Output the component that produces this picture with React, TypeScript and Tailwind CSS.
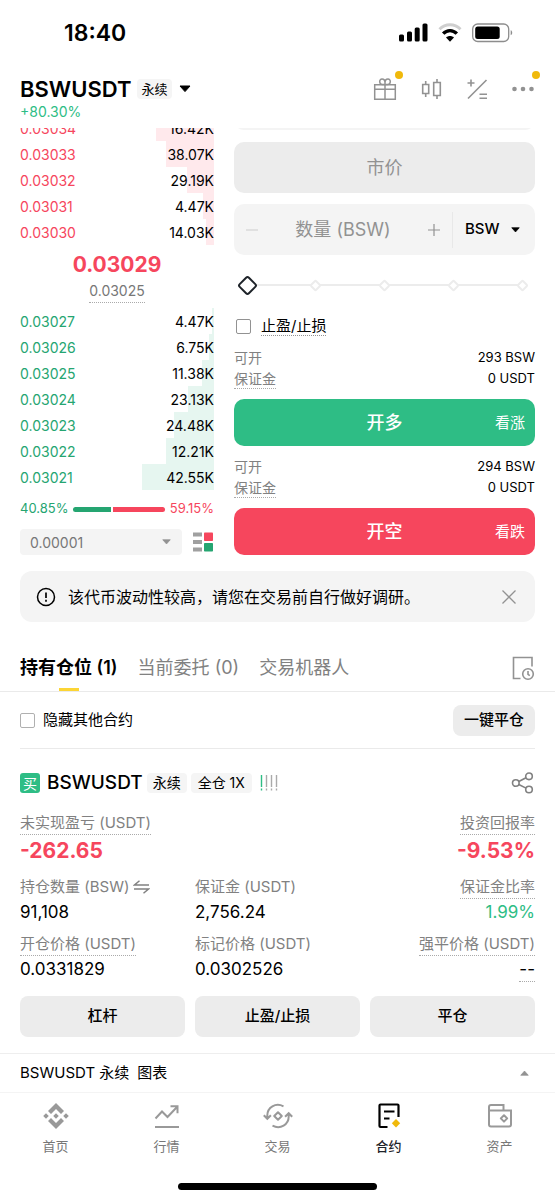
import { useState } from "react";
import type { ReactNode } from "react";
import clsx from "clsx";

type Order = {
  price: string;
  amount: string;
  depth: number; // percent of the book's width
};

const asks: Order[] = [
  { price: "0.03034", amount: "16.42K", depth: 30 },
  { price: "0.03033", amount: "38.07K", depth: 25 },
  { price: "0.03032", amount: "29.19K", depth: 14 },
  { price: "0.03031", amount: "4.47K", depth: 5.5 },
  { price: "0.03030", amount: "14.03K", depth: 4 },
];

const bids: Order[] = [
  { price: "0.03027", amount: "4.47K", depth: 1 },
  { price: "0.03026", amount: "6.75K", depth: 2.5 },
  { price: "0.03025", amount: "11.38K", depth: 6 },
  { price: "0.03024", amount: "23.13K", depth: 13.5 },
  { price: "0.03023", amount: "24.48K", depth: 20.5 },
  { price: "0.03022", amount: "12.21K", depth: 24.5 },
  { price: "0.03021", amount: "42.55K", depth: 37 },
];

const tabs = ["持有仓位 (1)", "当前委托 (0)", "交易机器人"];

function Triangle({ className, up }: { className?: string; up?: boolean }) {
  return (
    <svg viewBox="0 0 12 8" className={className} fill="currentColor" stroke="currentColor" strokeLinejoin="round">
      <path d={up ? "M1 7h10L6 1.4z" : "M1 1h10L6 6.6z"} />
    </svg>
  );
}

function StatusBar() {
  return (
    <div className="flex h-[66px] items-center justify-between pr-[42px] pl-16">
      <span className="text-[23px] leading-7 font-semibold">18:40</span>
      <div className="flex items-center gap-[10px]">
        <svg viewBox="0 0 29 20" className="h-5 w-[29px]">
          <rect x="0" y="11.5" width="5" height="7" rx="1.5" />
          <rect x="8" y="8.5" width="5" height="10" rx="1.5" />
          <rect x="15.7" y="4.5" width="5" height="14" rx="1.5" />
          <rect x="23.5" y="0.5" width="5" height="18" rx="1.5" />
        </svg>
        <svg viewBox="0 0 24 20" className="h-5 w-6" fill="none" strokeWidth="3">
          <path d="M1.5 6.2C7.4.4 16.6.4 22.5 6.2" stroke="#cfcfcf" />
          <path d="M5.2 10.7c3.9-4.1 9.7-4.1 13.6 0" stroke="#000" strokeWidth="3.4" />
          <path d="M12 18.8l4-4.2c-2.3-2-5.7-2-8 0z" fill="#000" stroke="none" />
        </svg>
        <svg viewBox="0 0 41 20" className="h-5 w-[41px]">
          <rect x="0.7" y="1" width="36" height="17.5" rx="5" fill="none" stroke="#8d8d8d" strokeWidth="1.3" />
          <rect x="3.2" y="3.5" width="24.5" height="12.5" rx="2.5" />
          <path d="M38.7 7.3c2 .6 2 4.3 0 4.9z" fill="#8d8d8d" />
        </svg>
      </div>
    </div>
  );
}

function Header() {
  return (
    <header className="px-5 pt-2">
      <div className="flex h-[30px] items-center justify-between">
        <div className="flex items-center">
          <h1 className="text-[22px] font-semibold">BSWUSDT</h1>
          <span className="ml-[6px] rounded-sm bg-[#f5f5f5] px-1 text-[13px] leading-5">永续</span>
          <button aria-label="选择合约" className="ml-[7px]">
            <Triangle className="h-2 w-3" />
          </button>
        </div>
        <div className="flex items-center gap-[22px] text-[#929292]">
          <button aria-label="奖励" className="relative">
            <svg viewBox="0 0 24 24" className="size-6" fill="none" stroke="currentColor" strokeWidth="1.5">
              <path d="M1.7 7.7h20.6v14.6H1.7zM1.7 12.3h20.6M12 7.7v14.6" />
              <path d="M12 7.5H9.3C6 7.5 5.800 2 9 2c2 0 3 1.600 3 3.700zM12 7.500h2.700C18 7.500 18.200 2 15 2c-2 0-3 1.600-3 3.700z" />
            </svg>
            <span className="absolute -top-[6px] -right-[6px] size-2 rounded-full bg-[#f0b90b]" />
          </button>
          <button aria-label="K线">
            <svg viewBox="0 0 24 24" className="size-6" fill="none" stroke="currentColor" strokeWidth="1.6">
              <path d="M3.7 7.5h6v9h-6zM6.700 4v3.500M6.700 16.500V20M14.700 5.500h6.600v13h-6.600zM18 2v3.500M18 18.500V22" />
            </svg>
          </button>
          <button aria-label="计算器">
            <svg viewBox="0 0 24 24" className="size-6" fill="none" stroke="currentColor" strokeWidth="1.6">
              <path d="M3 21.500L21.500 3M2.500 6h7M6 2.500v7M14.500 17.300h7.500M14.500 21.300h7.500" />
            </svg>
          </button>
          <button aria-label="更多" className="relative">
            <svg viewBox="0 0 24 24" className="size-6" fill="currentColor">
              <circle cx="3.5" cy="12" r="2.3" />
              <circle cx="12" cy="12" r="2.3" />
              <circle cx="20.5" cy="12" r="2.3" />
            </svg>
            <span className="absolute -top-[6px] -right-[5px] size-2 rounded-full bg-[#f0b90b]" />
          </button>
        </div>
      </div>
      <p className="text-[14px] leading-4 text-[#2ebd85]">+80.30%</p>
    </header>
  );
}

function OrderRow({ order, side }: { order: Order; side: "ask" | "bid" }) {
  return (
    <li className="relative flex h-[26px] items-center justify-between">
      <span
        className={clsx("absolute inset-y-0 right-0", side === "ask" ? "bg-[#ffe9ec]" : "bg-[#e6f6f0]")}
        style={{ width: `${order.depth}%` }}
      />
      <span className={clsx("relative", side === "ask" ? "text-[#f6465d]" : "text-[#25a571]")}>{order.price}</span>
      <span className="relative">{order.amount}</span>
    </li>
  );
}

function OrderBook() {
  return (
    <div className="overflow-hidden text-[14px]">
      <ul className="-mt-[13px]">
        {asks.map((order) => (
          <OrderRow key={order.price} order={order} side="ask" />
        ))}
      </ul>
      <div className="flex flex-col items-center pt-[6px] pb-[5px]">
        <strong className="text-[21px] leading-7 font-bold text-[#f6465d]">0.03029</strong>
        <span className="h-6 border-b border-dotted border-[#aaa] leading-6 text-[#777]">0.03025</span>
      </div>
      <ul>
        {bids.map((order) => (
          <OrderRow key={order.price} order={order} side="bid" />
        ))}
      </ul>
      <div className="mt-[9px] flex h-5 items-center gap-[5px] text-[13px]">
        <span className="text-[#25a571]">40.85%</span>
        <div className="flex h-[5px] flex-1 gap-[2px]">
          <span className="rounded-l-full bg-[#25a571]" style={{ width: "40.85%" }} />
          <span className="flex-1 rounded-r-full bg-[#f6465d]" />
        </div>
        <span className="text-[#f6465d]">59.15%</span>
      </div>
      <div className="mt-[10px] flex items-center gap-[10px]">
        <div className="relative flex-1 text-[#777]">
          <select
            aria-label="价格精度"
            className="block h-[26px] w-full appearance-none rounded-sm bg-[#f4f4f4] pl-[10px] text-[14px]"
          >
            <option>0.00001</option>
            <option>0.0001</option>
          </select>
          <Triangle className="pointer-events-none absolute top-[10px] right-[11px] h-[6px] w-[9px] text-[#929292]" />
        </div>
        <button aria-label="盘口显示">
          <svg viewBox="0 0 22 20" className="h-5 w-[22px]">
            <path d="M1 .5h9v4H1zM1 8h9v4H1zM1 15.500h9v4H1z" fill="#a0a0a0" />
            <rect x="12" y="0.5" width="9" height="8.5" rx="0.8" fill="#f6465d" />
            <rect x="12" y="11" width="9" height="8.5" rx="0.8" fill="#25a571" />
          </svg>
        </button>
      </div>
    </div>
  );
}

function AmountSlider() {
  const [value, setValue] = useState(0);
  return (
    <div className="relative flex h-[60px] items-center justify-between px-[7px]">
      <span className="absolute inset-x-3 h-[2px] bg-[#ececec]" />
      {[0, 25, 50, 75, 100].map((stop) => (
        <span key={stop} className="relative flex w-3 items-center justify-center">
          <span
            className={clsx(
              "shrink-0 rotate-45 border-2 bg-white",
              stop === value ? "size-[15px] rounded-[3px] border-[#1e2329]" : "size-[9px] rounded-[2px] border-[#ececec]"
            )}
          />
        </span>
      ))}
      <input
        type="range"
        aria-label="数量百分比"
        min={0}
        max={100}
        step={25}
        value={value}
        onChange={(e) => setValue(Number(e.target.value))}
        className="absolute inset-x-0 w-full cursor-pointer opacity-0"
      />
    </div>
  );
}

type OpenSideProps = {
  max: string;
  label: string;
  hint: string;
  className: string;
};

function OpenSide({ max, label, hint, className }: OpenSideProps) {
  return (
    <div className="mt-[10px] text-[14px] leading-[21px]">
      <div className="flex justify-between">
        <span className="text-[#818181]">可开</span>
        <span className="text-[13px]">{max}</span>
      </div>
      <div className="flex justify-between">
        <span className="h-[21px] border-b border-dotted border-[#aaa] text-[#818181]">保证金</span>
        <span className="text-[13px]">0 USDT</span>
      </div>
      <button
        className={clsx(
          "mt-[10px] grid h-[47px] w-full grid-cols-3 items-center rounded-[10px] px-[10px] text-white",
          className
        )}
      >
        <span className="col-start-2 text-[18px] font-medium">{label}</span>
        <span className="text-right text-[15px]">{hint}</span>
      </button>
    </div>
  );
}

function OrderForm() {
  return (
    <div>
      <div className="h-[14px] overflow-hidden">
        <div className="-mt-[49px] h-[51px] rounded-[10px] bg-[#f4f4f4]" />
      </div>
      <button disabled className="h-[51px] w-full rounded-[10px] bg-[#ececec] text-[18px] text-[#929292]">
        市价
      </button>
      <div className="mt-[11px] flex h-[51px] items-center rounded-[10px] bg-[#f4f4f4]">
        <button aria-label="减少" className="pl-3 text-[#ccc]">
          <svg viewBox="0 0 12 12" className="size-3" stroke="currentColor">
            <path d="M0 6h12" />
          </svg>
        </button>
        <input
          aria-label="数量"
          placeholder="数量 (BSW)"
          className="min-w-0 flex-1 bg-transparent text-center text-[18px] outline-none placeholder:text-[#929292]"
        />
        <button aria-label="增加" className="pr-3 text-[#929292]">
          <svg viewBox="0 0 12 12" className="size-3" stroke="currentColor" strokeWidth="1.2">
            <path d="M0 6h12M6 0v12" />
          </svg>
        </button>
        <div className="relative border-l border-[#e8e8e8]">
          <select
            aria-label="单位"
            className="block h-[36px] w-[82px] appearance-none bg-transparent pl-3 text-[15px] font-medium"
          >
            <option>BSW</option>
            <option>USDT</option>
          </select>
          <Triangle className="pointer-events-none absolute top-[15px] right-[15px] h-[6px] w-[9px]" />
        </div>
      </div>
      <AmountSlider />
      <label className="flex h-[22px] items-center gap-[10px] pl-[2px]">
        <input type="checkbox" className="size-[15px] appearance-none rounded-[2px] border border-[#929292] checked:bg-black" />
        <span className="h-[20px] border-b border-dotted border-[#929292] text-[15px] leading-[19px]">止盈/止损</span>
      </label>
      <OpenSide max="293 BSW" label="开多" hint="看涨" className="bg-[#2ebd85]" />
      <OpenSide max="294 BSW" label="开空" hint="看跌" className="bg-[#f6465d]" />
    </div>
  );
}

function Notice() {
  return (
    <div className="mx-5 mt-4 flex h-[51px] items-center rounded-xl bg-[#f4f4f4] px-4">
      <svg viewBox="0 0 20 20" className="size-5 shrink-0" fill="none" stroke="currentColor" strokeWidth="1.5">
        <circle cx="10" cy="10" r="8.5" />
        <path d="M10 5.500v5.500M10 12.700v2" strokeWidth="1.7" />
      </svg>
      <p className="ml-3 flex-1 text-[16px]">该代币波动性较高，请您在交易前自行做好调研。</p>
      <button aria-label="关闭" className="mr-[3px] text-[#929292]">
        <svg viewBox="0 0 14 14" className="size-[14px]" stroke="currentColor" strokeWidth="1.3">
          <path d="M.5.5l13 13M13.500.5l-13 13" />
        </svg>
      </button>
    </div>
  );
}

function PositionTabs() {
  const [active, setActive] = useState(0);
  return (
    <div className="mt-[22px] flex items-center justify-between border-b border-[#eaeaea] px-5">
      <div className="flex gap-5 text-[18px]">
        {tabs.map((tab, index) => (
          <button
            key={tab}
            onClick={() => setActive(index)}
            className={clsx("relative h-[47px]", index === active ? "font-semibold" : "text-[#818181]")}
          >
            {tab}
            {index === active && (
              <span className="absolute bottom-0 left-1/2 h-[3px] w-5 -translate-x-1/2 bg-[#fcd535]" />
            )}
          </button>
        ))}
      </div>
      <button aria-label="历史记录" className="text-[#929292]">
        <svg viewBox="0 0 24 26" className="h-[26px] w-6" fill="none" stroke="currentColor" strokeWidth="1.6">
          <path d="M9.500 23.500H2.500v-21h18.500v9" />
          <circle cx="17" cy="19" r="5.3" />
          <path d="M17 16v3.400l1.800 1.300" />
        </svg>
      </button>
    </div>
  );
}

type FieldProps = {
  label: ReactNode;
  value: string;
  dotted?: boolean;
  dottedValue?: boolean;
  end?: boolean;
  valueClass?: string;
};

function Field({ label, value, dotted, dottedValue, end, valueClass }: FieldProps) {
  return (
    <div className={clsx("flex flex-col whitespace-nowrap", end ? "items-end" : "items-start")}>
      <span
        className={clsx(
          "flex h-[23px] items-center border-b border-dotted text-[15px] text-[#818181]",
          dotted ? "border-[#aaa]" : "border-transparent"
        )}
      >
        {label}
      </span>
      <span
        className={clsx(
          valueClass ?? "h-[26px] text-[17px] leading-[26px]",
          dottedValue && "border-b border-dotted border-[#aaa]"
        )}
      >
        {value}
      </span>
    </div>
  );
}

function Position() {
  const big = "h-8 text-[21px] leading-8 font-bold text-[#f6465d]";
  return (
    <section className="px-5">
      <div className="flex h-14 items-center justify-between">
        <label className="flex items-center gap-2 text-[15px]">
          <input type="checkbox" className="size-[15px] appearance-none rounded-[2px] border border-[#b0b0b0] checked:bg-black" />
          隐藏其他合约
        </label>
        <button className="h-[31px] rounded-lg bg-[#ececec] px-[11px] text-[15px] font-medium">一键平仓</button>
      </div>
      <div className="flex items-center border-t border-[#eaeaea] pt-5">
        <span className="flex size-5 items-center justify-center rounded-[3px] bg-[#2ebd85] text-[14px] text-white">
          买
        </span>
        <h2 className="ml-[7px] text-[19px] leading-7 font-medium">BSWUSDT</h2>
        <span className="ml-1 rounded-sm bg-[#f5f5f5] px-[6px] text-[14px] leading-5">永续</span>
        <span className="ml-1 rounded-sm bg-[#f5f5f5] px-[7px] text-[14px] leading-5">全仓 1X</span>
        <svg viewBox="0 0 18 16" className="ml-2 h-4 w-[18px]" strokeWidth="1.4">
          <path d="M1.500 0v12M1.500 13.500v2" stroke="#2ebd85" />
          <path d="M6.500 0v12M6.500 13.500v2M11.500 0v12M11.500 13.500v2M16.500 0v12M16.500 13.500v2" stroke="#aaa" />
        </svg>
        <button aria-label="分享" className="ml-auto text-[#818181]">
          <svg viewBox="0 0 24 24" className="size-6" fill="none" stroke="currentColor" strokeWidth="1.6">
            <circle cx="4.8" cy="12" r="3.3" />
            <circle cx="18" cy="5.3" r="3.3" />
            <circle cx="18" cy="18.5" r="3.3" />
            <path d="M7.800 10.500l7.200-3.700M7.800 13.500l7.200 3.600" />
          </svg>
        </button>
      </div>
      <div className="mt-[15px] flex justify-between">
        <Field label="未实现盈亏 (USDT)" value="-262.65" dotted valueClass={big} />
        <Field label="投资回报率" value="-9.53%" dotted end valueClass={big} />
      </div>
      <div className="mt-[9px] grid grid-cols-3 gap-x-[10px] gap-y-2">
        <Field
          label={
            <>
              持仓数量 (BSW)
              <svg viewBox="0 0 17 14" className="ml-1 h-[14px] w-[17px]" fill="none" stroke="currentColor" strokeWidth="1.5">
                <path d="M16 5H1.500L6.500.8M1 9h14.500l-5 4.200" />
              </svg>
            </>
          }
          value="91,108"
        />
        <Field label="保证金 (USDT)" value="2,756.24" />
        <Field label="保证金比率" value="1.99%" dotted end valueClass="h-[26px] text-[17px] leading-[26px] text-[#2ebd85]" />
        <Field label="开仓价格 (USDT)" value="0.0331829" dotted />
        <Field label="标记价格 (USDT)" value="0.0302526" />
        <Field label="强平价格 (USDT)" value="--" dotted dottedValue end />
      </div>
      <div className="mt-[14px] grid grid-cols-3 gap-[10px] text-[15px] font-medium">
        <button className="h-[41px] rounded-lg bg-[#ececec]">杠杆</button>
        <button className="h-[41px] rounded-lg bg-[#ececec]">止盈/止损</button>
        <button className="h-[41px] rounded-lg bg-[#ececec]">平仓</button>
      </div>
    </section>
  );
}

function NavItem({ label, active, children }: { label: string; active?: boolean; children: ReactNode }) {
  return (
    <a
      href="#"
      className={clsx("flex flex-1 flex-col items-center", active ? "font-medium text-[#1e2329]" : "text-[#777]")}
    >
      <svg viewBox="0 0 26 26" className="size-[26px] overflow-visible" fill="none" stroke={active ? "#000" : "#999"} strokeWidth="2">
        {children}
      </svg>
      <span className="mt-[9px] text-[13px] leading-4">{label}</span>
    </a>
  );
}

function BottomNav() {
  return (
    <nav className="flex border-t border-[#f4f4f4] pt-[10px]">
      <NavItem label="首页">
        <g fill="#999" stroke="none">
          <path d="M13 0l8 8-3 3-5-5-5 5-3-3zM13 26l8-8-3-3-5 5-5-5-3 3z" />
          <path d="M13 10.200l2.800 2.800-2.800 2.800-2.800-2.800zM3 10.200L5.800 13 3 15.800.2 13zM23 10.200l2.800 2.800-2.800 2.800-2.800-2.800z" />
        </g>
      </NavItem>
      <NavItem label="行情">
        <path d="M1 24h24M1.500 15.500l6.500-7 5.500 5.500L23 4M16.500 3.300h7v7" />
      </NavItem>
      <NavItem label="交易">
        <path d="M18.500 3.300C10.500-.8 2.300 4.500 2.300 12.500v3M-1.200 12.200l3.500 3.600 3.600-3.600M7.500 22.700c8 4.100 16.200-1.200 16.200-9.200v-3M20.100 13.800l3.600-3.600 3.500 3.600" />
        <path d="M13 9.200l3.800 3.800-3.800 3.800L9.200 13z" strokeLinejoin="round" />
      </NavItem>
      <NavItem label="合约" active>
        <path d="M11.500 24H4.500a1 1 0 0 1-1-1V2.500a1 1 0 0 1 1-1h17a1 1 0 0 1 1 1V14M8 8.500h10.500M8 15.500h5.500" strokeWidth="2.2" />
        <path d="M20 16l4.200 4.200-4.200 4.200-4.200-4.200z" fill="#f0b90b" stroke="none" />
      </NavItem>
      <NavItem label="资产">
        <path d="M2 7.500V4a2 2 0 0 1 2-2h12.500v5.500M2 6.500V21.500a2 2 0 0 0 2 2h18a2 2 0 0 0 2-2v-14H2" />
        <path d="M17 12.200l3.200 3.200-3.200 3.200-3.200-3.200z" strokeLinejoin="round" />
      </NavItem>
    </nav>
  );
}

export default function App() {
  return (
    <div className="bg-white font-['Inter','Noto_Sans_CJK_SC',sans-serif] text-black">
      <StatusBar />
      <Header />
      <main>
        <div className="mt-2 grid grid-cols-[minmax(0,194fr)_minmax(0,301fr)] gap-5 px-5">
          <OrderBook />
          <OrderForm />
        </div>
        <Notice />
        <PositionTabs />
        <Position />
      </main>
      <button className="mt-4 flex h-[39px] w-full items-center justify-between border-t border-[#eee] px-5 text-[15px]">
        <span className="flex gap-2">
          <span>BSWUSDT 永续</span>
          <span>图表</span>
        </span>
        <Triangle up className="mr-[6px] h-[6px] w-[9px] text-[#929292]" />
      </button>
      <BottomNav />
      <div className="mx-auto mt-[29px] mb-[10px] h-[7px] w-[36%] rounded-full bg-black" />
    </div>
  );
}
